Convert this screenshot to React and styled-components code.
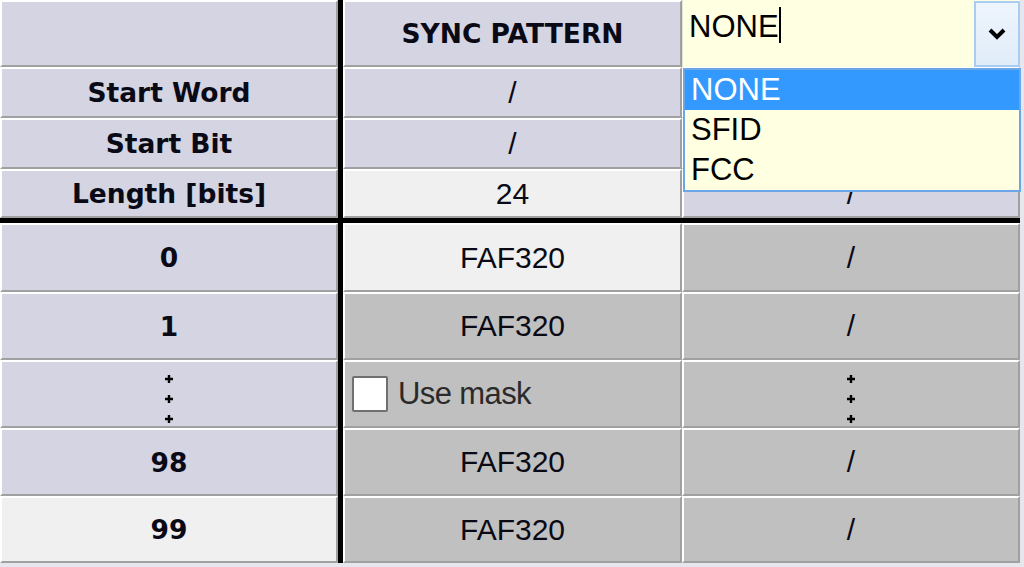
import React from 'react';
import styled, { createGlobalStyle } from 'styled-components';

const Global = createGlobalStyle`
  html, body { margin: 0; padding: 0; background: #e6e6ee; }
  body {
    width: 1024px; height: 567px; overflow: hidden;
    font-family: "Liberation Sans", Arial, sans-serif;
  }
`;

const tones = {
  lav: '#d4d4e2',
  gray: '#c0c0c0',
  light: '#f0f0f0',
};

const Grid = styled.div`
  display: grid;
  grid-template-columns: 338px 5px 339px 338px;
  grid-template-rows: 67px 51px 51px 49px 5px 69px 68px 68px 68px 67px;
  width: 1020px;
`;

const VBar = styled.div`
  grid-column: 2;
  grid-row: 1 / -1;
  background: #000;
`;

const HBar = styled.div`
  grid-column: 1 / -1;
  grid-row: 5;
  background: #000;
`;

const Cell = styled.div`
  box-sizing: border-box;
  display: flex;
  align-items: center;
  justify-content: ${(p) => (p.$start ? 'flex-start' : 'center')};
  padding-left: ${(p) => (p.$start ? '7px' : '0')};
  padding-top: ${(p) => (p.$dots ? '10px' : '0')};
  border-top: 2px solid #fff;
  border-left: 2px solid #fff;
  border-right: 2px solid #a0a0a0;
  border-bottom: 2px solid #a0a0a0;
  background: ${(p) => tones[p.$tone || 'lav']};
  font-family: ${(p) =>
    p.$bold ? '"DejaVu Sans", Verdana, sans-serif' : '"Liberation Sans", Arial, sans-serif'};
  font-weight: ${(p) => (p.$bold ? 700 : 400)};
  font-size: ${(p) => (p.$bold ? '26.5px' : '30px')};
  color: #0a0a16;
  white-space: nowrap;
  overflow: hidden;
`;

const ComboCell = styled.div`
  position: relative;
  display: flex;
  align-items: stretch;
  background: #ffffe1;
  border-left: 1px solid #e2e2d2;
  z-index: 2;
`;

const ComboText = styled.div`
  flex: 1;
  display: flex;
  align-items: flex-start;
  padding-left: 6px;
  font-family: "Liberation Sans", Arial, sans-serif;
  font-size: 31px;
  color: #000;
`;

const ComboLabel = styled.span`
  padding-top: 9px;
  line-height: 36px;
`;

const Caret = styled.span`
  width: 2px;
  height: 36px;
  margin-top: 7px;
  background: #000;
`;

const DropButton = styled.div`
  box-sizing: border-box;
  width: 46px;
  margin: 1px 0 0 0;
  display: flex;
  align-items: center;
  justify-content: center;
  border: 2px solid #a9cdf2;
  background: linear-gradient(#eef5fd, #e0ecf9);
`;

const DropList = styled.div`
  position: absolute;
  top: 68px;
  left: 0;
  width: 338px;
  box-sizing: border-box;
  border: 2px solid #6ba6e8;
  background: #ffffe1;
  font-family: "Liberation Sans", Arial, sans-serif;
  font-size: 31px;
`;

const DropItem = styled.div`
  height: 40px;
  display: flex;
  align-items: center;
  padding-left: 6px;
  background: ${(p) => (p.$active ? '#3399ff' : 'transparent')};
  color: ${(p) => (p.$active ? '#fff' : '#000')};
`;

const CheckBox = styled.span`
  box-sizing: border-box;
  width: 36px;
  height: 36px;
  border: 2px solid #707070;
  border-radius: 2px;
  background: #fff;
  margin-right: 10px;
  flex-shrink: 0;
`;

const CheckLabel = styled.span`
  font-family: "Liberation Sans", Arial, sans-serif;
  font-size: 31px;
  letter-spacing: -0.6px;
  color: #2a2a2a;
`;

const DotStack = styled.div`
  display: flex;
  flex-direction: column;
  align-items: center;
  gap: 12px;
`;

const Dot = () => (
  <svg width="8" height="8" viewBox="0 0 8 8">
    <path d="M2.8 0h2.4v2.8H8v2.4H5.2V8H2.8V5.2H0V2.8h2.8z" fill="#000" />
  </svg>
);

const Dots = () => (
  <DotStack>
    <Dot />
    <Dot />
    <Dot />
  </DotStack>
);

const Chevron = () => (
  <svg width="18" height="14" viewBox="0 0 18 14">
    <polyline points="2,3 9,10 16,3" fill="none" stroke="#000" strokeWidth="4" />
  </svg>
);

export default function App() {
  return (
    <>
      <Global />
      <Grid>
        <VBar />
        <HBar />

        <Cell />
        <Cell $bold>SYNC PATTERN</Cell>
        <ComboCell>
          <ComboText>
            <ComboLabel>NONE</ComboLabel>
            <Caret />
          </ComboText>
          <DropButton>
            <Chevron />
          </DropButton>
          <DropList>
            <DropItem $active>NONE</DropItem>
            <DropItem>SFID</DropItem>
            <DropItem>FCC</DropItem>
          </DropList>
        </ComboCell>

        <Cell $bold>Start Word</Cell>
        <Cell>/</Cell>
        <Cell>/</Cell>

        <Cell $bold>Start Bit</Cell>
        <Cell>/</Cell>
        <Cell>/</Cell>

        <Cell $bold>Length [bits]</Cell>
        <Cell $tone="light">24</Cell>
        <Cell>/</Cell>

        <Cell $bold>0</Cell>
        <Cell $tone="light">FAF320</Cell>
        <Cell $tone="gray">/</Cell>

        <Cell $bold>1</Cell>
        <Cell $tone="gray">FAF320</Cell>
        <Cell $tone="gray">/</Cell>

        <Cell $dots><Dots /></Cell>
        <Cell $tone="gray" $start>
          <CheckBox />
          <CheckLabel>Use mask</CheckLabel>
        </Cell>
        <Cell $tone="gray" $dots><Dots /></Cell>

        <Cell $bold>98</Cell>
        <Cell $tone="gray">FAF320</Cell>
        <Cell $tone="gray">/</Cell>

        <Cell $bold $tone="light">99</Cell>
        <Cell $tone="gray">FAF320</Cell>
        <Cell $tone="gray">/</Cell>
      </Grid>
    </>
  );
}
